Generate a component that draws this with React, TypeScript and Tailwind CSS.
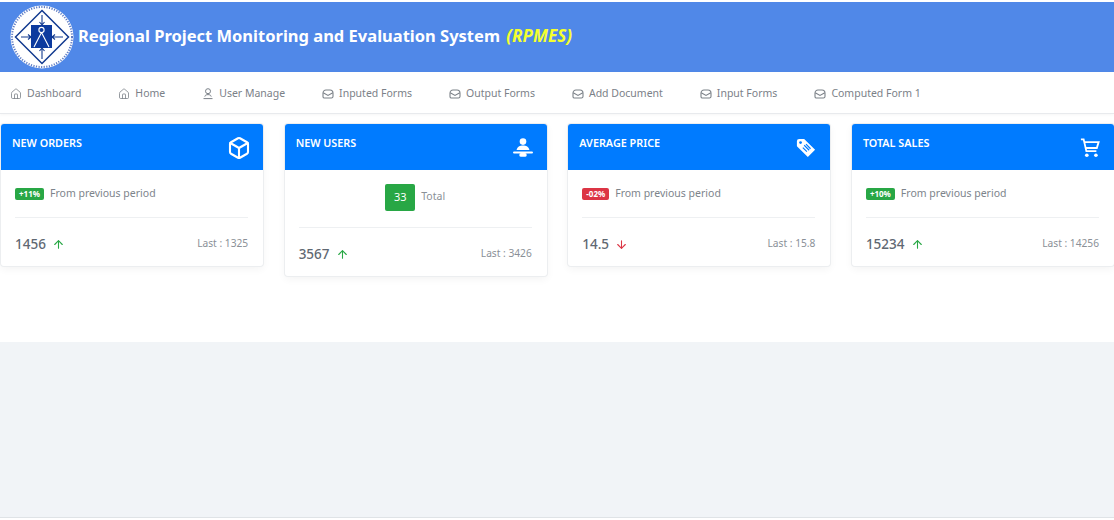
import { ArrowDown, ArrowUp, Box, Home } from "lucide-react"
import type { ReactNode } from "react"

const navItems = [
  { label: "Dashboard", icon: "home" },
  { label: "Home", icon: "home" },
  { label: "User Manage", icon: "user" },
  { label: "Inputed Forms", icon: "mail" },
  { label: "Output Forms", icon: "mail" },
  { label: "Add Document", icon: "mail" },
  { label: "Input Forms", icon: "mail" },
  { label: "Computed Form 1", icon: "mail" },
]

function Logo() {
  return (
    <svg width="64" height="64" viewBox="0 0 64 64" className="shrink-0">
      <circle cx="32" cy="32" r="31.5" fill="#ffffff" />
      <circle cx="32" cy="32" r="30" fill="none" stroke="#5f7cc4" strokeWidth="2" strokeDasharray="1.2 1.4" />
      <path d="M32 5.5 L58.5 32 L32 58.5 L5.5 32 Z" fill="none" stroke="#123a8f" strokeWidth="1.5" />
      <rect x="21" y="20" width="21" height="23" fill="#0c3a9e" />
      <circle cx="31.5" cy="25" r="2.6" fill="none" stroke="#ffffff" strokeWidth="1.1" />
      <path d="M31.5 27.6 L24 42 M31.5 27.6 L39 42" stroke="#ffffff" strokeWidth="1.1" fill="none" />
      <path
        d="M32 10 V20 M29.5 17 L32 20 L34.5 17 M32 54 V43 M29.5 46 L32 43 L34.5 46 M11 32 H21 M18 29.5 L21 32 L18 34.5 M53 32 H42 M45 29.5 L42 32 L45 34.5"
        stroke="#123a8f"
        strokeWidth="1.1"
        fill="none"
      />
    </svg>
  )
}

function UserOutlineIcon() {
  return (
    <svg width="12" height="12" viewBox="0 0 12 12" fill="none" stroke="currentColor" strokeWidth="1">
      <circle cx="6" cy="3.2" r="2.5" />
      <path d="M2.8 8.6 C3 7.2 4.3 6.6 6 6.6 C7.7 6.6 9 7.2 9.2 8.6" />
      <path d="M1.5 10.6 H10.5" />
    </svg>
  )
}

function EnvelopeIcon() {
  return (
    <svg width="12" height="12" viewBox="0 0 12 12" fill="none" stroke="currentColor" strokeWidth="1.1">
      <path d="M1 5.2 C1 3 2.4 2 4 2 H8 C9.6 2 11 3 11 5.2 V8.4 C11 9.4 10.4 10 9.4 10 H2.6 C1.6 10 1 9.4 1 8.4 Z" />
      <path d="M1.2 4.8 L6 7.4 L10.8 4.8" />
    </svg>
  )
}

function UserDeskIcon() {
  return (
    <svg width="20" height="21" viewBox="0 0 20 21" fill="#ffffff">
      <circle cx="10" cy="3.6" r="3.3" />
      <path d="M3.6 12 C4 8.6 7 7.4 10 7.4 C13 7.4 16 8.6 16.4 12 Z" />
      <rect x="0" y="13.4" width="20" height="2.2" rx="1.1" />
      <rect x="6.4" y="15" width="7.2" height="3.8" rx="1.6" />
    </svg>
  )
}

function TagIcon() {
  return (
    <svg width="22" height="22" viewBox="0 0 22 22">
      <path d="M1 3.5 A2.5 2.5 0 0 1 3.5 1 H9 L21 13 L13 21 L1 9 Z" fill="#ffffff" />
      <circle cx="5" cy="5" r="1.5" fill="#007bff" />
      <path d="M9 8 L14.5 13.5 M7.5 10.5 L12 15 M11 6.8 L16 11.8" stroke="#007bff" strokeWidth="1.3" />
    </svg>
  )
}

function CartIcon() {
  return (
    <svg width="24" height="24" viewBox="0 0 22 22" fill="none" stroke="#ffffff" strokeWidth="2">
      <path d="M1 1.5 H4 L7 14.5 H18" />
      <path d="M4.8 4.5 H20.5 L18.5 11 H6.2" />
      <circle cx="7.5" cy="19" r="2" fill="#ffffff" stroke="none" />
      <circle cx="17.5" cy="19" r="2" fill="#ffffff" stroke="none" />
    </svg>
  )
}

type CardProps = {
  title: string
  icon: ReactNode
  children: ReactNode
  value: string
  down?: boolean
  last: string
}

function Card({ title, icon, children, value, down, last }: CardProps) {
  return (
    <div className="self-start overflow-hidden rounded-[3px] bg-white shadow-[0_0_0_1px_#eceef0,0_3px_8px_rgba(0,0,0,0.05)]">
      <div className="flex h-[46px] justify-between bg-[#007bff] pl-[11px] pr-[14px] text-white">
        <h3 className="pt-[11px] text-[10.8px] leading-4 font-semibold">{title}</h3>
        <div className="flex h-full w-5 items-center justify-center pt-[2px]">{icon}</div>
      </div>
      <div className="pl-[14px] pr-[15px]">
        {children}
        <div className="flex h-[49px] items-center justify-between border-t border-[#eef0f2] pt-[4px]">
          <div className="flex items-center gap-[6px]">
            <span className="text-[13.5px] font-medium text-[#5f6872]">{value}</span>
            {down ? (
              <ArrowDown size={13} strokeWidth={2} className="text-[#dc3545]" />
            ) : (
              <ArrowUp size={13} strokeWidth={2} className="text-[#28a745]" />
            )}
          </div>
          <span className="text-[10.2px] text-[#8a9097]">{last}</span>
        </div>
      </div>
    </div>
  )
}

function Period({ badge, red }: { badge: string; red?: boolean }) {
  return (
    <div className="flex h-[47px] items-center gap-[6px]">
      <span
        className={
          red
            ? "rounded-[2px] bg-[#dc3545] px-1 text-[8px] leading-3 font-bold text-white"
            : "rounded-[2px] bg-[#28a745] px-1 text-[8px] leading-3 font-bold text-white"
        }
      >
        {badge}
      </span>
      <span className="text-[10.5px] text-[#7d848b]">From previous period</span>
    </div>
  )
}

export default function App() {
  return (
    <div className="flex h-[520px] flex-col overflow-hidden bg-white font-['Noto_Sans',sans-serif] text-[#6c757d]">
      {/* Top bar */}
      <header className="mt-[2px] flex h-[70px] items-center gap-1 bg-[#5088e8] pl-[10px]">
        <Logo />
        <h1 className="-mt-[3px] text-[16.5px] font-bold text-white">
          Regional Project Monitoring and Evaluation System{" "}
          <em className="ml-[2px] text-[17px] text-[#f4ff2e]">(RPMES)</em>
        </h1>
      </header>

      {/* Nav */}
      <nav className="flex h-[42px] items-center gap-[37px] border-b border-[#e8eaed] pt-[2px] pl-[10px] shadow-[0_1px_3px_rgba(0,0,0,0.04)]">
        {navItems.map((item) => (
          <a key={item.label} href="#" className="flex items-center gap-[5px] text-[10.5px] text-[#7b8188]">
            {item.icon === "home" && <Home size={12} strokeWidth={1.6} />}
            {item.icon === "user" && <UserOutlineIcon />}
            {item.icon === "mail" && <EnvelopeIcon />}
            {item.label}
          </a>
        ))}
      </nav>

      {/* Cards */}
      <main className="grid h-[228px] grid-cols-4 gap-[21.5px] pt-[10px] pl-px">
        <Card title="NEW ORDERS" icon={<Box size={24} strokeWidth={2.1} className="shrink-0" />} value="1456" last="Last : 1325">
          <Period badge="+11%" />
        </Card>
        <Card title="NEW USERS" icon={<UserDeskIcon />} value="3567" last="Last : 3426">
          <div className="flex h-[57px] items-center justify-center gap-[6px] pb-[2px]">
            <span className="flex h-[27px] w-[30px] items-center justify-center rounded-[2px] bg-[#28a745] text-[11px] text-white">
              33
            </span>
            <span className="-mt-[2px] text-[10.5px] text-[#8a9097]">Total</span>
          </div>
        </Card>
        <Card title="AVERAGE PRICE" icon={<TagIcon />} value="14.5" down last="Last : 15.8">
          <Period badge="-02%" red />
        </Card>
        <Card title="TOTAL SALES" icon={<CartIcon />} value="15234" last="Last : 14256">
          <Period badge="+10%" />
        </Card>
      </main>

      <div className="flex-1 bg-[#f1f4f7]" />
      <div className="h-[3px] border-t border-[#dfe3e6] bg-white" />
    </div>
  )
}
